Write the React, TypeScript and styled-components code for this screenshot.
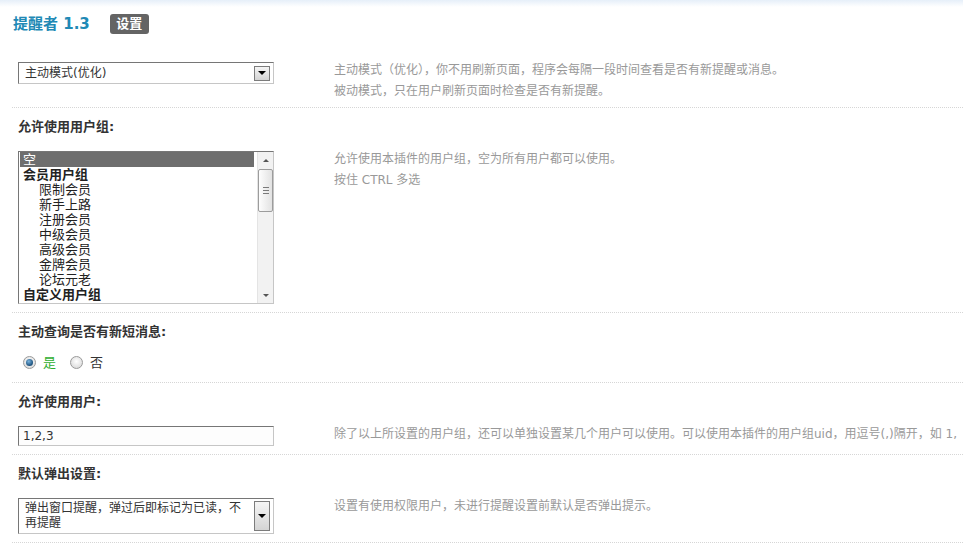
import React from "react";
import styled, { createGlobalStyle } from "styled-components";

const GlobalStyle = createGlobalStyle`
  html, body { margin: 0; padding: 0; background: #fff; }
  body {
    font: 12px/1.5 "DejaVu Sans", "Noto Sans CJK SC", sans-serif;
    color: #333;
    overflow: hidden;
  }
`;

const Page = styled.div`
  width: 963px;
  height: 546px;
  overflow: hidden;
  background: linear-gradient(#e6eff9, #fff 7px) no-repeat;
`;

const Header = styled.div`
  display: flex;
  align-items: center;
  gap: 20px;
  height: 20px;
  padding: 14px 13px 0;
  margin-bottom: 28px;
`;

const Title = styled.h3`
  margin: 0;
  font-size: 15px;
  font-weight: bold;
  line-height: 20px;
  color: #2189b5;
  white-space: nowrap;
`;

const Badge = styled.span`
  display: inline-flex;
  align-items: center;
  justify-content: center;
  width: 39px;
  height: 20px;
  border-radius: 3px;
  background: #646464;
  color: #fff;
  font-size: 13px;
  font-weight: bold;
`;

const Section = styled.div`
  margin-left: 12px;
  border-bottom: 1px dotted #d6d6d6;
`;

const Label = styled.div`
  padding: 12px 6px 17px;
  font-size: 13px;
  font-weight: bold;
  line-height: 14px;
  color: #333;
  white-space: nowrap;
`;

const Row = styled.div`
  display: grid;
  grid-template-columns: 316px minmax(0, 1fr);
  align-items: start;
  padding: 0 6px 8px;
`;

const Tip = styled.div`
  margin: -2px 0 -3px;
  min-width: 0;
  overflow: hidden;
  color: #999;
  line-height: 21px;
  white-space: nowrap;
`;

const SelectBox = styled.div<{ $h: number }>`
  display: flex;
  align-items: center;
  width: 256px;
  height: ${(p) => p.$h}px;
  box-sizing: border-box;
  padding: 0 3px 0 6px;
  border: 1px solid;
  border-color: #767676 #c6c6c6 #c6c6c6 #767676;
  background: #fff;
  color: #333;
`;

const SelectText = styled.div`
  flex: 1;
  padding-right: 8px;
  font-size: 12px;
  line-height: 15px;
`;

const DropButton = styled.div<{ $h: number }>`
  display: flex;
  align-items: center;
  justify-content: center;
  width: 16px;
  height: ${(p) => p.$h}px;
  box-sizing: border-box;
  border: 1px solid #7c7c7c;
  background: linear-gradient(#f5f5f5, #d4d4d4);

  &::after {
    content: "";
    border-left: 4px solid transparent;
    border-right: 4px solid transparent;
    border-top: 4px solid #000;
  }
`;

const ListBox = styled.div`
  display: flex;
  width: 256px;
  height: 153px;
  box-sizing: border-box;
  border: 1px solid;
  border-color: #767676 #c6c6c6 #c6c6c6 #767676;
  background: #fff;
`;

const Options = styled.div`
  flex: 1;
  padding: 0 3px 0 1px;
  overflow: hidden;
  font-size: 13px;
  line-height: 15px;
`;

const Option = styled.div<{ $indent?: boolean; $group?: boolean; $selected?: boolean }>`
  padding-left: ${(p) => (p.$indent ? 19 : 3)}px;
  font-weight: ${(p) => (p.$group ? "bold" : "normal")};
  background: ${(p) => (p.$selected ? "#6e6e6e" : "transparent")};
  color: ${(p) => (p.$selected ? "#fff" : "#222")};
  white-space: nowrap;
`;

const ScrollBar = styled.div`
  display: flex;
  flex-direction: column;
  width: 16px;
  box-sizing: border-box;
  border-left: 1px solid #e4e4e4;
  background: #f2f2f2;
`;

const Arrow = styled.div<{ $down?: boolean }>`
  display: flex;
  align-items: center;
  justify-content: center;
  height: 16px;

  &::after {
    content: "";
    border-left: 3px solid transparent;
    border-right: 3px solid transparent;
    ${(p) => (p.$down ? "border-top: 3px solid #555;" : "border-bottom: 3px solid #555;")}
  }
`;

const Thumb = styled.div`
  display: flex;
  flex-direction: column;
  align-items: center;
  justify-content: center;
  gap: 2px;
  height: 43px;
  margin: 1px 0 0;
  box-sizing: border-box;
  border: 1px solid #9c9c9c;
  border-radius: 2px;
  background: linear-gradient(to right, #fdfdfd, #e2e2e2);

  span {
    width: 6px;
    height: 1px;
    background: #7a7a7a;
  }
`;

const Track = styled.div`
  flex: 1;
`;

const RadioGroup = styled.div`
  display: flex;
  align-items: center;
  height: 13px;
  padding: 0 0 5px 5px;
`;

const RadioItem = styled.label<{ $active?: boolean }>`
  display: flex;
  align-items: center;
  gap: 7px;
  margin-right: 14px;
  font-size: 13px;
  color: ${(p) => (p.$active ? "#2fae2f" : "#333")};
`;

const RadioDot = styled.span<{ $checked?: boolean }>`
  display: inline-flex;
  align-items: center;
  justify-content: center;
  width: 13px;
  height: 13px;
  box-sizing: border-box;
  border: 1px solid #9a9a9a;
  border-radius: 50%;
  background: radial-gradient(circle at 50% 40%, #fff, #d2d2d2);

  &::after {
    content: "";
    display: ${(p) => (p.$checked ? "block" : "none")};
    width: 7px;
    height: 7px;
    border-radius: 50%;
    background: radial-gradient(circle at 40% 35%, #7ab4e0, #1a4f7a 70%);
  }
`;

const TextInput = styled.input`
  width: 256px;
  height: 20px;
  box-sizing: border-box;
  margin: 0;
  padding: 0 4px;
  border: 1px solid;
  border-color: #767676 #c6c6c6 #c6c6c6 #767676;
  background: #fdfdfd;
  font: 12px/18px "DejaVu Sans", sans-serif;
  color: #333;
  outline: none;
`;

const groups: { text: string; indent?: boolean; group?: boolean; selected?: boolean }[] = [
  { text: "空", selected: true },
  { text: "会员用户组", group: true },
  { text: "限制会员", indent: true },
  { text: "新手上路", indent: true },
  { text: "注册会员", indent: true },
  { text: "中级会员", indent: true },
  { text: "高级会员", indent: true },
  { text: "金牌会员", indent: true },
  { text: "论坛元老", indent: true },
  { text: "自定义用户组", group: true },
];

export default function App() {
  return (
    <Page>
      <GlobalStyle />
      <Header>
        <Title>提醒者 1.3</Title>
        <Badge>设置</Badge>
      </Header>

      <Section>
        <Row>
          <SelectBox $h={22}>
            <SelectText>主动模式(优化)</SelectText>
            <DropButton $h={15} />
          </SelectBox>
          <Tip>
            主动模式（优化），你不用刷新页面，程序会每隔一段时间查看是否有新提醒或消息。
            <br />
            被动模式，只在用户刷新页面时检查是否有新提醒。
          </Tip>
        </Row>
      </Section>

      <Section>
        <Label>允许使用用户组:</Label>
        <Row>
          <ListBox>
            <Options>
              {groups.map((g) => (
                <Option key={g.text} $indent={g.indent} $group={g.group} $selected={g.selected}>
                  {g.text}
                </Option>
              ))}
            </Options>
            <ScrollBar>
              <Arrow />
              <Thumb>
                <span />
                <span />
                <span />
              </Thumb>
              <Track />
              <Arrow $down />
            </ScrollBar>
          </ListBox>
          <Tip>
            允许使用本插件的用户组，空为所有用户都可以使用。
            <br />
            按住 CTRL 多选
          </Tip>
        </Row>
      </Section>

      <Section>
        <Label>主动查询是否有新短消息:</Label>
        <Row>
          <RadioGroup>
            <RadioItem $active>
              <RadioDot $checked />是
            </RadioItem>
            <RadioItem>
              <RadioDot />否
            </RadioItem>
          </RadioGroup>
        </Row>
      </Section>

      <Section>
        <Label>允许使用用户:</Label>
        <Row>
          <TextInput defaultValue="1,2,3" readOnly />
          <Tip>
            除了以上所设置的用户组，还可以单独设置某几个用户可以使用。可以使用本插件的用户组uid，用逗号(,)隔开，如 1,2,3
          </Tip>
        </Row>
      </Section>

      <Section>
        <Label>默认弹出设置:</Label>
        <Row>
          <SelectBox $h={36}>
            <SelectText>弹出窗口提醒，弹过后即标记为已读，不再提醒</SelectText>
            <DropButton $h={30} />
          </SelectBox>
          <Tip>设置有使用权限用户，未进行提醒设置前默认是否弹出提示。</Tip>
        </Row>
      </Section>
    </Page>
  );
}
